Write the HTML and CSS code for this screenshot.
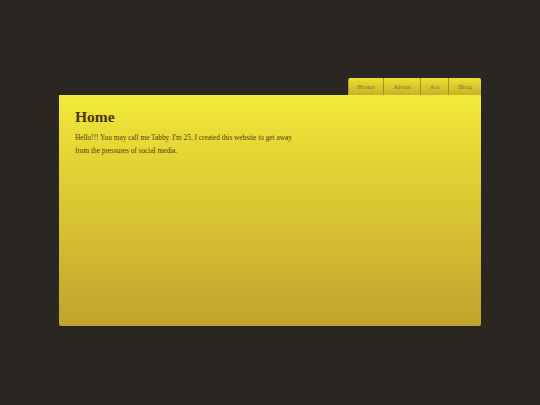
FILE: index.html
```html
<!DOCTYPE html>
<html>
<head>
<meta charset="utf-8">
<link rel="stylesheet" href="styles.css">
</head>
<body>
<div class="page">
  <nav class="tabs">
    <a class="tab tab-home">Home</a>
    <a class="tab tab-about">About</a>
    <a class="tab tab-art">Art</a>
    <a class="tab tab-blog">Blog</a>
  </nav>
  <main class="panel">
    <h1 class="title">Home</h1>
    <p class="text">Hello!!! You may call me Tabby. I'm 25, I created this website to get away from the pressures of social media.</p>
  </main>
</div>
</body>
</html>
```
FILE: styles.css
```css
html, body {
  margin: 0;
  padding: 0;
  background: #2a2723;
  width: 540px;
  height: 405px;
  overflow: hidden;
}
.page {
  width: 422px;
  margin: 78px 0 0 59px;
  display: flex;
  flex-direction: column;
  font-family: "Liberation Serif", "DejaVu Serif", serif;
}
.tabs {
  display: flex;
  justify-content: flex-end;
  height: 17px;
}
.tab {
  display: flex;
  align-items: center;
  justify-content: center;
  height: 17px;
  box-sizing: border-box;
  font-size: 7px;
  color: #857a34;
  background: linear-gradient(to bottom, #ece037 0%, #d9c62a 55%, #c9b222 100%);
  border-right: 1px solid #a8921c;
  border-radius: 0;
}
.tab:first-child { border-top-left-radius: 2px; border-left: 1px solid #b49e22; }
.tab:last-child { border-right: none; border-top-right-radius: 2px; }
.tab-home { width: 36px; }
.tab-about { width: 37px; }
.tab-art { width: 28px; }
.tab-blog { width: 32px; }
.panel {
  height: 231px;
  box-sizing: border-box;
  border-radius: 0 0 2px 2px;
  background: linear-gradient(to bottom, #f3e93a 0%, #e8d935 20%, #d7c232 55%, #c1a22e 100%);
  padding: 13px 16px 0 16px;
}
.title {
  margin: 0;
  font-size: 15.5px;
  font-weight: bold;
  color: #47380e;
  line-height: 18px;
}
.text {
  margin: 5px 0 0 0;
  width: 222px;
  font-size: 7.3px;
  line-height: 13px;
  color: #4e3f10;
}
```
